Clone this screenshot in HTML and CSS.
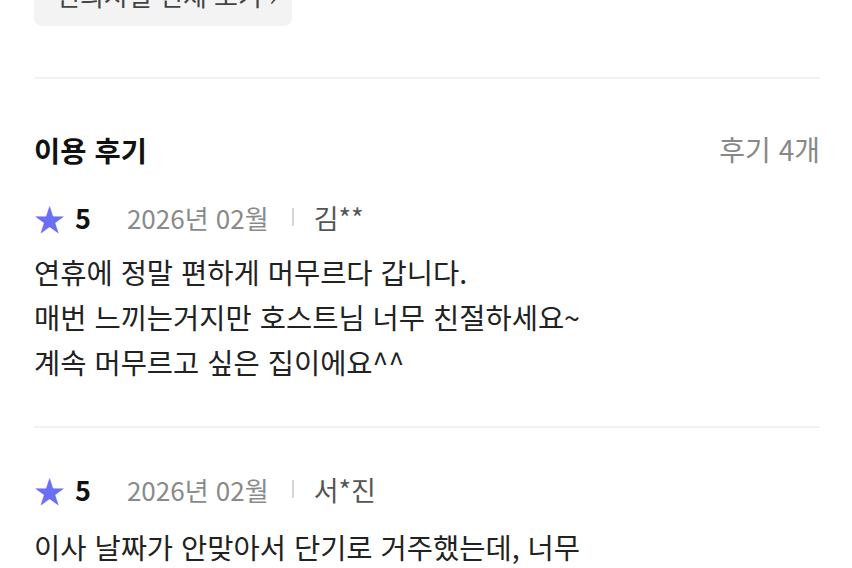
FILE: index.html
```html
<!DOCTYPE html>
<html lang="ko">
<head>
    <meta charset="UTF-8">
    <meta name="viewport" content="width=device-width, initial-scale=1.0">
    <title>이용 후기</title>
    <link rel="stylesheet" href="styles.css">
</head>
<body>
    <div class="page">
        <!-- 상단 버튼 (잘린 영역) -->
        <button class="more-btn">편의시설 전체 보기 ›</button>

        <hr class="divider top-divider">

        <!-- 후기 헤더 -->
        <div class="review-head">
            <h2 class="review-title">이용 후기</h2>
            <span class="review-count">후기 4개</span>
        </div>

        <div class="review">
            <div class="review-meta">
                <span class="star">★</span>
                <span class="score">5</span>
                <span class="date">2026년 02월</span>
                <span class="sep"></span>
                <span class="name">김**</span>
            </div>
            <p class="review-text">연휴에 정말 편하게 머무르다 갑니다.<br>매번 느끼는거지만 호스트님 너무 친절하세요~<br>계속 머무르고 싶은 집이에요^^</p>
        </div>

        <hr class="divider">

        <div class="review">
            <div class="review-meta">
                <span class="star">★</span>
                <span class="score">5</span>
                <span class="date">2026년 02월</span>
                <span class="sep"></span>
                <span class="name">서*진</span>
            </div>
            <p class="review-text">이사 날짜가 안맞아서 단기로 거주했는데, 너무<br>깔끔하고 조용해서 좋았어요.</p>
        </div>
    </div>
</body>
</html>
```

FILE: styles.css
```css
body {
    margin: 0;
    background-color: #fff;
    font-family: "Noto Sans CJK KR", "Noto Sans", sans-serif;
    color: #222;
    overflow: hidden;
}

.page {
    padding: 0 32px 0 34px;
}

.more-btn {
    display: block;
    width: 258px;
    height: 64px;
    margin-top: -38px;
    padding: 0 22px;
    border: none;
    border-radius: 8px;
    background-color: #f3f3f3;
    color: #444;
    font-family: inherit;
    font-size: 26px;
    text-align: left;
    white-space: nowrap;
    overflow: hidden;
}

.divider {
    margin: 0;
    border: none;
    height: 2px;
    background-color: #f2f2f2;
}

.top-divider {
    margin-top: 51px;
}

.review-head {
    display: flex;
    justify-content: space-between;
    align-items: center;
    margin-top: 52px;
    height: 36px;
}

.review-title {
    margin: 0;
    font-size: 28.5px;
    font-weight: 700;
    color: #111;
}

.review-count {
    font-size: 28px;
    color: #888;
}

.review {
    padding: 32px 0 42px;
}

.review + .divider + .review {
    padding-top: 43px;
}

.review + .divider + .review .review-text {
    margin-top: 17px;
}

.review-meta {
    display: flex;
    align-items: center;
    height: 36px;
    font-size: 26px;
}

.star {
    color: #6d6ff2;
    font-size: 31px;
    width: 30px;
    margin-left: 0;
}

.score {
    margin-left: 11px;
    font-size: 27px;
    font-weight: 700;
    color: #111;
}

.date {
    margin-left: 36px;
    color: #8a8a8a;
}

.sep {
    width: 2px;
    height: 18px;
    margin: 0 20px 0 23px;
    background-color: #d6d6d6;
}

.name {
    font-size: 27px;
    color: #555;
}

.review-text {
    margin: 14px 0 0;
    font-size: 28.5px;
    line-height: 45px;
    color: #222;
}
```
